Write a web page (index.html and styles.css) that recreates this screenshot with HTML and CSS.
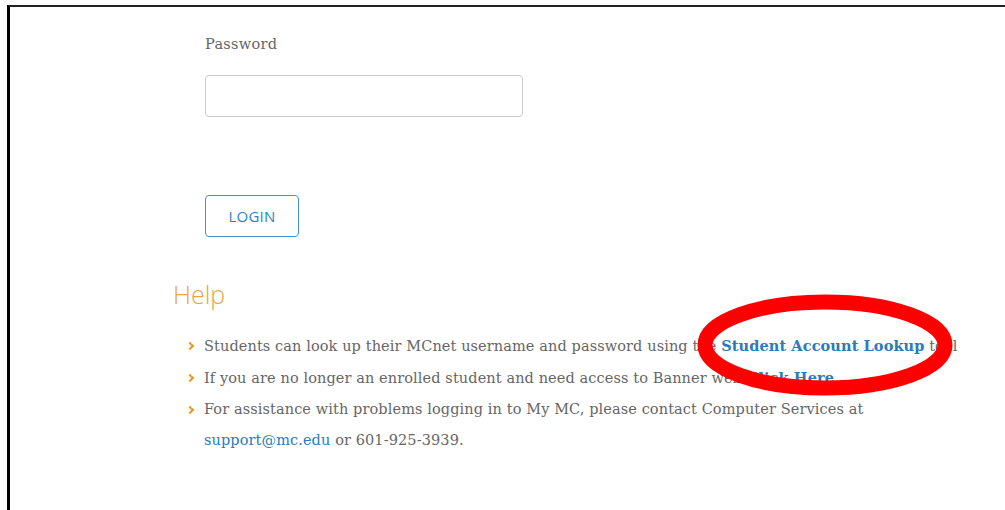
FILE: index.html
```html
<!DOCTYPE html>
<html lang="en">
<head>
<meta charset="utf-8">
<title>My MC Login</title>
<link rel="stylesheet" href="styles.css">
</head>
<body>
<div class="frame">
  <form class="login">
    <label class="field-label" for="pw">Password</label>
    <input class="field-input" id="pw" type="password">
    <button class="btn-login" type="button">LOGIN</button>
  </form>

  <section class="help">
    <h2 class="help-title">Help</h2>
    <ul class="help-list">
      <li>Students can look up their MCnet username and password using the <a class="strong-link" href="#">Student Account Lookup</a> tool</li>
      <li>If you are no longer an enrolled student and need access to Banner web <a class="strong-link" href="#">Click Here</a></li>
      <li>For assistance with problems logging in to My MC, please contact Computer Services at <a class="plain-link" href="#">support@mc.edu</a> or 601-925-3939.</li>
    </ul>
    <svg class="mark" width="270" height="116" viewBox="0 0 270 116" aria-hidden="true">
      <ellipse cx="135" cy="58" rx="120" ry="43" fill="none" stroke="#ff0000" stroke-width="15"/>
    </svg>
  </section>
</div>
</body>
</html>
```

FILE: styles.css
```css
html, body {
  margin: 0;
  height: 100%;
  background: #fff;
}

.frame {
  box-sizing: border-box;
  margin: 5px 0 0 7px;
  height: calc(100% - 5px);
  border-top: 2px solid #222;
  border-left: 3px solid #000;
  padding: 27px 0 0 0;
  font-family: "DejaVu Serif", "Liberation Serif", serif;
  color: #666;
}

.login {
  display: flex;
  flex-direction: column;
  align-items: flex-start;
  padding-left: 195px;
}

.field-label {
  font-size: 14.5px;
  line-height: 20px;
  color: #666;
  letter-spacing: 0.3px;
}

.field-input {
  box-sizing: border-box;
  margin-top: 21px;
  width: 318px;
  height: 42px;
  border: 1px solid #ccc;
  border-radius: 4px;
  background: #fff;
}

.btn-login {
  box-sizing: border-box;
  margin-top: 78px;
  width: 94px;
  height: 42px;
  border: 1px solid #3f94cc;
  border-radius: 4px;
  background: #fff;
  color: #2f7fbf;
  font-family: "Open Sans", "Liberation Sans", sans-serif;
  font-size: 15px;
  letter-spacing: 0.2px;
  padding: 0;
}

.help {
  position: relative;
  padding-left: 163px;
}

.help-title {
  margin: 42px 0 0 0;
  font-family: "Open Sans", "Lato", sans-serif;
  font-weight: 300;
  font-size: 25px;
  line-height: 30px;
  color: #e8a647;
}

.help-list {
  list-style: none;
  margin: 21px 0 0 0;
  padding: 0 0 0 31px;
  width: 770px;
  font-size: 14.5px;
  line-height: 31px;
  letter-spacing: 0.1px;
}

.help-list li {
  position: relative;
}

.help-list li::before {
  content: "";
  position: absolute;
  left: -17px;
  top: 13px;
  width: 4px;
  height: 4px;
  border-top: 2px solid #e89a2c;
  border-right: 2px solid #e89a2c;
  transform: rotate(45deg);
}

.help-list a {
  text-decoration: none;
  color: #2a7bbd;
}

.strong-link {
  font-weight: bold;
}

.mark {
  position: absolute;
  left: 680px;
  top: 8px;
  pointer-events: none;
}
```
